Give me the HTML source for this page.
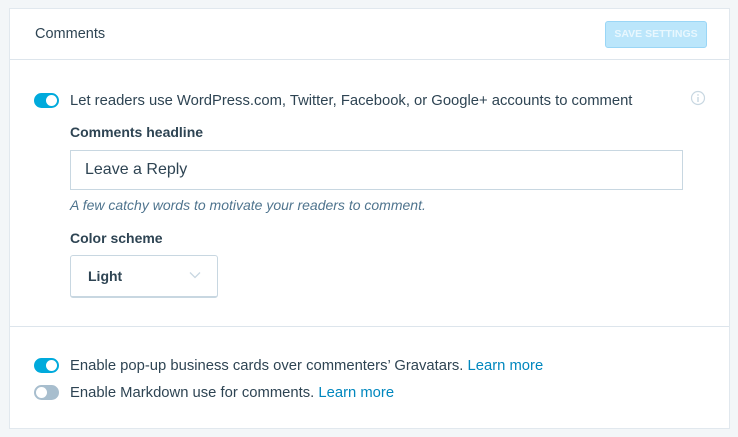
<!DOCTYPE html>
<html><head><meta charset="utf-8"><style>
*{box-sizing:border-box;margin:0;padding:0}
body{width:738px;height:437px;background:#f3f6f8;font-family:"Liberation Sans",sans-serif;color:#2e4453;position:relative;overflow:hidden}
.card{position:absolute;left:9px;top:8px;width:721px;height:421px;background:#fff;border:1px solid #e1e8ee}
.abs{position:absolute}
.hdr{left:25px;top:17px;font-size:14.5px;color:#2e4453}
.btn{left:595px;top:12px;width:102px;height:27px;background:#bbe6fb;border:1px solid #9ad6f6;border-radius:3px;color:#e8f7fe;font-size:10.5px;font-weight:bold;text-align:center;line-height:25px;white-space:nowrap}
.line{left:0;width:719px;height:1px;background:#dde5ec}
.tog{width:25px;height:15px;border-radius:8px;background:#00aadc}
.tog::after{content:"";position:absolute;top:2px;right:2px;width:11px;height:11px;border-radius:50%;background:#fff}
.tog.off{background:#a8bece}
.tog.off::after{right:auto;left:2px}
.t{font-size:14.8px;color:#2e4453;white-space:nowrap}
.b{font-size:14px;font-weight:bold;color:#2e4453}
a{color:#0087be;text-decoration:none}
.inp{left:60px;top:141px;width:613px;height:40px;border:1px solid #c8d7e1;font-size:16px;padding-left:14px;line-height:38px}
.help{left:60px;top:188px;font-size:14px;font-style:italic;color:#4f748e;white-space:nowrap}
.sel{left:60px;top:246px;width:148px;height:43px;border:1px solid #c8d7e1;border-bottom:2px solid #c8d7e1;border-radius:3px;font-size:14px;font-weight:bold;padding-left:17px;line-height:40px}
</style></head><body>
<div class="card">
<div class="abs hdr">Comments</div>
<div class="abs btn">SAVE SETTINGS</div>
<div class="abs line" style="top:50px"></div>
<div class="abs tog" style="left:24px;top:84px"></div>
<div class="abs t" style="left:60px;top:84px">Let readers use WordPress.com, Twitter, Facebook, or Google+ accounts to comment</div>
<svg class="abs" style="left:680px;top:81px" width="16" height="16" viewBox="0 0 16 16"><circle cx="8" cy="8" r="6.5" fill="none" stroke="#c8d7e1" stroke-width="1.2"/><rect x="7.3" y="7" width="1.4" height="5" fill="#c8d7e1"/><rect x="7.3" y="4.2" width="1.4" height="1.5" fill="#c8d7e1"/></svg>
<div class="abs b" style="left:60px;top:115px">Comments headline</div>
<div class="abs inp">Leave a Reply</div>
<div class="abs help">A few catchy words to motivate your readers to comment.</div>
<div class="abs b" style="left:60px;top:221px">Color scheme</div>
<div class="abs sel">Light<svg class="abs" style="left:118px;top:15px" width="12" height="8" viewBox="0 0 12 8"><path d="M1 1.5L6 6.5L11 1.5" fill="none" stroke="#c8d7e1" stroke-width="1.3"/></svg></div>
<div class="abs line" style="top:317px"></div>
<div class="abs tog" style="left:24px;top:349px"></div>
<div class="abs t" style="left:60px;top:349px">Enable pop-up business cards over commenters’ Gravatars. <a>Learn more</a></div>
<div class="abs tog off" style="left:24px;top:376px"></div>
<div class="abs t" style="left:60px;top:376px">Enable Markdown use for comments. <a>Learn more</a></div>
</div>
</body></html>
